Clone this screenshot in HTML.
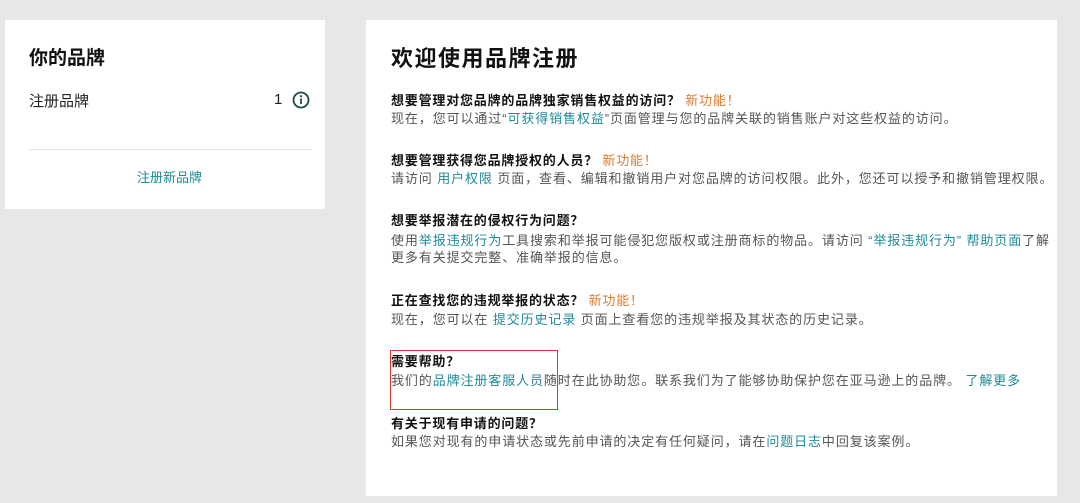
<!DOCTYPE html>
<html><head><meta charset="utf-8"><style>
*{margin:0;padding:0;box-sizing:border-box}
body{width:1080px;height:503px;background:#e7e7e7;font-family:"Liberation Sans","Noto Sans CJK SC",sans-serif;position:relative;overflow:hidden;color:#444}
.card{position:absolute;background:#fff}
.a{position:absolute;white-space:nowrap}
.t{font-weight:bold;color:#111;font-size:13px;letter-spacing:0.8px}
.b{font-size:13px;color:#555;letter-spacing:0.9px}
a{color:#1f8a99;text-decoration:none}
.n{color:#e07b2c;font-weight:normal}
</style></head><body>
<div class="card" style="left:5px;top:20px;width:320px;height:189px"></div>
<div class="a" style="left:29px;top:43px;font-size:19px;font-weight:bold;color:#111">你的品牌</div>
<div class="a" style="left:29px;top:90px;font-size:15px;color:#222">注册品牌</div>
<div class="a" style="left:274px;top:91px;font-size:15px;color:#222">1</div>
<svg class="a" style="left:292px;top:91px" width="18" height="18" viewBox="0 0 18 18"><circle cx="9" cy="9" r="7.5" fill="none" stroke="#1d4a4e" stroke-width="1.8"/><rect x="8.1" y="7.5" width="1.8" height="5.5" fill="#1d4a4e"/><circle cx="9" cy="5.2" r="1.1" fill="#1d4a4e"/></svg>
<div class="a" style="left:29px;top:149px;width:283px;height:1px;background:#e4e4e4"></div>
<div class="a" style="left:137px;top:167px;font-size:13px"><a>注册新品牌</a></div>

<div class="card" style="left:366px;top:20px;width:691px;height:476px"></div>
<div class="a" style="left:391px;top:41px;font-size:22px;font-weight:bold;color:#111;letter-spacing:1.5px">欢迎使用品牌注册</div>

<div class="a t" style="left:391px;top:90px">想要管理对您品牌的品牌独家销售权益的访问？ <span class="n">新功能！</span></div>
<div class="a b" style="left:391px;top:108px">现在，您可以通过“<a>可获得销售权益</a>”页面管理与您的品牌关联的销售账户对这些权益的访问。</div>

<div class="a t" style="left:391px;top:150px">想要管理获得您品牌授权的人员？ <span class="n">新功能！</span></div>
<div class="a b" style="left:391px;top:168px">请访问 <a>用户权限</a> 页面，查看、编辑和撤销用户对您品牌的访问权限。此外，您还可以授予和撤销管理权限。</div>

<div class="a t" style="left:391px;top:210px">想要举报潜在的侵权行为问题？</div>
<div class="a b" style="left:391px;top:230px">使用<a>举报违规行为</a>工具搜索和举报可能侵犯您版权或注册商标的物品。请访问 <a>“举报违规行为” 帮助页面</a>了解</div>
<div class="a b" style="left:391px;top:247px">更多有关提交完整、准确举报的信息。</div>

<div class="a t" style="left:391px;top:290px">正在查找您的违规举报的状态？ <span class="n">新功能！</span></div>
<div class="a b" style="left:391px;top:309px">现在，您可以在 <a>提交历史记录</a> 页面上查看您的违规举报及其状态的历史记录。</div>

<div class="a t" style="left:391px;top:351px">需要帮助？</div>
<div class="a b" style="left:391px;top:370px">我们的<a>品牌注册客服人员</a>随时在此协助您。联系我们为了能够协助保护您在亚马逊上的品牌。 <a>了解更多</a></div>
<div class="a" style="left:390px;top:350px;width:168px;height:60px;border:1.5px solid #e53935"></div>

<div class="a t" style="left:391px;top:413px">有关于现有申请的问题？</div>
<div class="a b" style="left:391px;top:431px">如果您对现有的申请状态或先前申请的决定有任何疑问，请在<a>问题日志</a>中回复该案例。</div>
</body></html>
